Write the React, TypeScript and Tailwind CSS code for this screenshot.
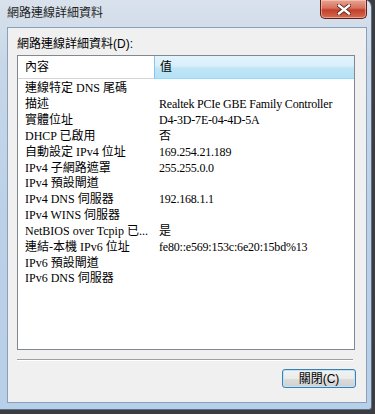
import React from "react";

const rows: [string, string][] = [
  ["連線特定 DNS 尾碼", ""],
  ["描述", "Realtek PCIe GBE Family Controller"],
  ["實體位址", "D4-3D-7E-04-4D-5A"],
  ["DHCP 已啟用", "否"],
  ["自動設定 IPv4 位址", "169.254.21.189"],
  ["IPv4 子網路遮罩", "255.255.0.0"],
  ["IPv4 預設閘道", ""],
  ["IPv4 DNS 伺服器", "192.168.1.1"],
  ["IPv4 WINS 伺服器", ""],
  ["NetBIOS over Tcpip 已...", "是"],
  ["連結-本機 IPv6 位址", "fe80::e569:153c:6e20:15bd%13"],
  ["IPv6 預設閘道", ""],
  ["IPv6 DNS 伺服器", ""],
];

const sans = { fontFamily: '"Liberation Sans", "Noto Sans CJK TC", sans-serif' };
const serif = { fontFamily: '"Liberation Serif", "Noto Sans CJK TC", serif' };

export default function App() {
  return (
    <div className="w-[375px] h-[414px] bg-[#3b3d40] overflow-hidden relative">
      <div className="w-[372px] h-[410px] rounded-tr-[7px] rounded-br-[3px] bg-[linear-gradient(180deg,#d9e2ec_0%,#c8d7e8_15%,#bcd1e8_50%,#b7cfe8_100%)] border-r border-b border-[#5a6e86] flex flex-col relative">
        {/* title bar */}
        <div className="h-[27px] flex items-start shrink-0">
          <div className="pl-[7px] pt-[5px] text-[12px] leading-[16px] text-[#1e1e1e]" style={sans}>
            網路連線詳細資料
          </div>
          <div className="ml-auto mr-[4px] w-[47px] h-[19px] rounded-b-[5px] border border-t-0 border-[#5c1f1a] bg-[linear-gradient(180deg,#e8a493_0%,#d7705b_45%,#c2402a_55%,#d66b52_100%)] flex items-center justify-center shadow-[inset_0_0_0_1px_rgba(255,220,210,0.5)]">
            <svg width="14" height="11" viewBox="0 0 14 11">
              <path d="M2 1.5 L12 9.5 M12 1.5 L2 9.5" stroke="#4a1a14" strokeWidth="4" strokeLinecap="square" />
              <path d="M2 1.5 L12 9.5 M12 1.5 L2 9.5" stroke="#ffffff" strokeWidth="2.4" strokeLinecap="square" />
            </svg>
          </div>
        </div>
        {/* client area */}
        <div className="ml-[7px] mr-[4px] h-[376px] border border-[#8a9fb8] bg-[#f0f0f0] flex flex-col pl-[9px] pr-[11px]">
          <div className="pt-[9px] h-[27px] text-[12px] leading-[14px] text-black" style={sans}>
            網路連線詳細資料(D):
          </div>
          <div className="h-[295px] border border-[#828790] bg-white flex flex-col">
            <div className="flex h-[23px] shrink-0">
              <div className="w-[136px] border-b border-[#d5d5d5] bg-white flex items-center pl-[7px] text-[12px] text-black" style={sans}>
                內容
              </div>
              <div className="flex-1 border-l border-[#86c6e8] border-b border-b-[#96d9f9] bg-[linear-gradient(180deg,#e3f4fc_0%,#d8eff9_45%,#bfe6f7_55%,#b6e2f5_100%)] flex items-center pl-[5px] text-[12px] text-black" style={sans}>
                值
              </div>
            </div>
            <div className="pt-[2px] flex flex-col">
              {rows.map(([k, v], i) => (
                <div key={i} className="flex h-[15.84px] items-center text-[12px] leading-[15px] text-black whitespace-nowrap" style={serif}>
                  <div className="w-[136px] pl-[7px] overflow-hidden">{k}</div>
                  <div className="flex-1 pl-[5px] tracking-[-0.2px]">{v}</div>
                </div>
              ))}
            </div>
          </div>
          <div className="mt-[9px] h-[2px] border-t border-[#a0a0a0] border-b border-b-white mr-[2px]" />
          <div className="flex justify-end mt-[8px] mr-[-1px]">
            <div className="w-[74px] h-[19px] rounded-[3px] border border-[#3c7fb1] bg-[linear-gradient(180deg,#f2f2f2_0%,#ebebeb_50%,#dddddd_51%,#cfcfcf_100%)] shadow-[inset_0_0_0_1px_#bfe4f8] flex items-center justify-center text-[12px] text-black" style={sans}>
              關閉(C)
            </div>
          </div>
        </div>
      </div>
    </div>
  );
}
